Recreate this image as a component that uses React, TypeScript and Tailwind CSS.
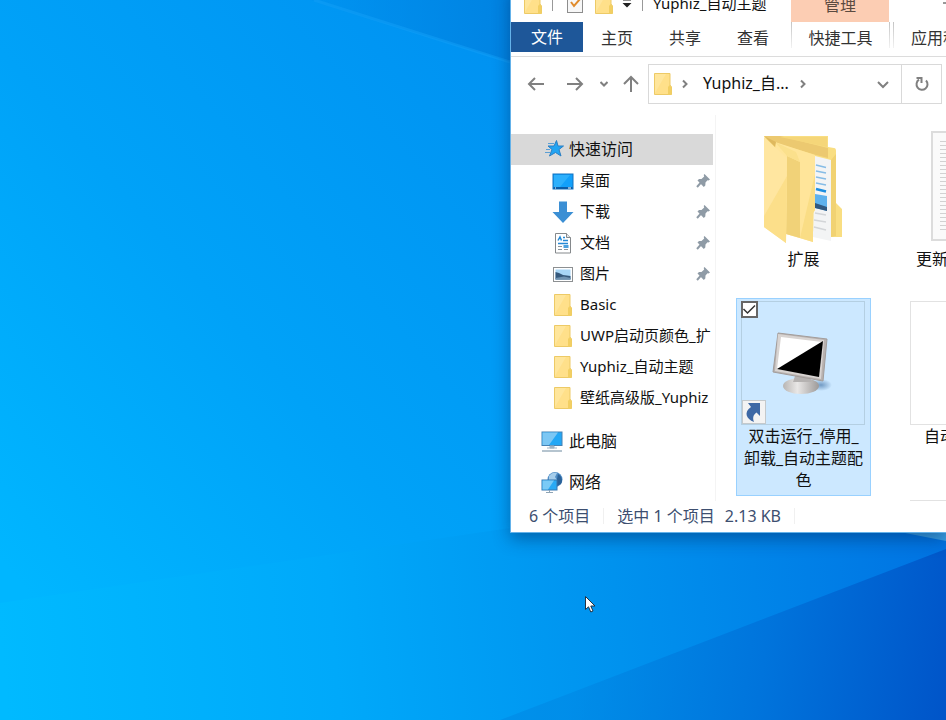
import type { ReactNode } from "react";

function Wallpaper() {
  return (
    <svg className="absolute inset-0 h-full w-full" viewBox="0 0 946 720" preserveAspectRatio="none" aria-hidden="true">
      <defs>
        <linearGradient id="sky" x1="0" y1="560" x2="560" y2="80" gradientUnits="userSpaceOnUse">
          <stop offset="0" stopColor="#00b6ff" />
          <stop offset="0.45" stopColor="#00a2f8" />
          <stop offset="1" stopColor="#0091f1" />
        </linearGradient>
        <linearGradient id="corner" x1="300" y1="20" x2="510" y2="0" gradientUnits="userSpaceOnUse">
          <stop offset="0" stopColor="#0086e4" stopOpacity="0.1" />
          <stop offset="1" stopColor="#0083e2" />
        </linearGradient>
        <linearGradient id="floor" x1="0" y1="640" x2="946" y2="560" gradientUnits="userSpaceOnUse">
          <stop offset="0" stopColor="#00baff" />
          <stop offset="0.35" stopColor="#00a9fa" />
          <stop offset="0.65" stopColor="#0092ee" />
          <stop offset="1" stopColor="#0073e2" />
        </linearGradient>
        <linearGradient id="wedge" x1="580" y1="640" x2="946" y2="690" gradientUnits="userSpaceOnUse">
          <stop offset="0" stopColor="#0085e2" stopOpacity="0.5" />
          <stop offset="0.5" stopColor="#0074dc" />
          <stop offset="1" stopColor="#0055c9" />
        </linearGradient>
      </defs>
      <rect width="946" height="720" fill="url(#sky)" />
      <path d="M310 0H946V200L510 62Z" fill="url(#corner)" />
      <path d="M314 0L510 62" stroke="#12a0f8" strokeOpacity="0.5" strokeWidth="3" />
      <path d="M0 603L510 528L946 500V720H0Z" fill="url(#floor)" />
      <path d="M946 549L500 720H946Z" fill="url(#wedge)" />
      <path d="M880 525L946 531V541L900 532Z" fill="#3aa0e4" />
    </svg>
  );
}

function FolderIcon() {
  return (
    <svg className="h-[22px] w-[18px] shrink-0" viewBox="0 0 18 22" aria-hidden="true">
      <path d="M0.5 0.5H16V12L17.5 14V21.5H0.5Z" fill="#ffe08a" stroke="#edca66" />
      <path d="M1 20V1H12Z" fill="#ffe9a8" opacity="0.6" />
      <path d="M14 21.500V14L15.500 12L17.500 14V21.500Z" fill="#f2cf63" />
    </svg>
  );
}

function StarIcon() {
  return (
    <svg className="h-5 w-5 shrink-0" viewBox="0 0 20 20" aria-hidden="true">
      <path d="M11.500 1.500L13 7H18.500L14 10.500L16 17L10.500 13.500L4.500 17L7 10.500L3 7H9Z" fill="#22a5f3" stroke="#2b7fc4" />
      <path d="M3 4.500H9M1 10.500H5M0 13.500H5" stroke="#5b9fd4" />
    </svg>
  );
}

function DesktopIcon() {
  return (
    <svg className="h-[22px] w-[22px] shrink-0" viewBox="0 0 22 22" aria-hidden="true">
      <rect x="1" y="4" width="20" height="15" fill="#12a0fa" stroke="#1272c0" />
      <path d="M2 17V5H18L8 17Z" fill="#2db0fc" />
      <path d="M1.500 18H20.500" stroke="#0b5da8" strokeWidth="2" />
      <path d="M3 18H4M16 18H19" stroke="#fff" />
    </svg>
  );
}

function DownloadIcon() {
  return (
    <svg className="h-[22px] w-[22px] shrink-0" viewBox="0 0 22 22" aria-hidden="true">
      <path d="M7 0.500H15V11H21.500L11 22L0.500 11H7Z" fill="#3b8fd4" />
    </svg>
  );
}

function DocumentIcon() {
  return (
    <svg className="h-[22px] w-[22px] shrink-0" viewBox="0 0 22 22" aria-hidden="true">
      <path d="M3.500 1.500H14.500L18.500 5.500V21H3.500Z" fill="#fff" stroke="#85898c" />
      <path d="M14.500 1.500V5.500H18.500" fill="#e4e6e8" stroke="#85898c" />
      <path d="M6 8.500L8 5L9.500 8.500M11 5.500H13M11 8.500H16M6 11.500H16" fill="none" stroke="#2589d6" strokeWidth="1.500" />
      <path d="M6 14.500H10M6 17.500H10M12 17.500H16" stroke="#8b949b" />
      <rect x="11.500" y="13" width="5" height="3" fill="#4ba0de" />
    </svg>
  );
}

function PictureIcon() {
  return (
    <svg className="h-[22px] w-[22px] shrink-0" viewBox="0 0 22 22" aria-hidden="true">
      <rect x="1.500" y="4.500" width="19" height="14" fill="#fff" stroke="#8d9092" />
      <rect x="3.500" y="6.500" width="15" height="10" fill="#a7d6f7" />
      <path d="M3.500 16.500V9L7 10L11 12L18.500 13V16.500Z" fill="#35597c" />
      <path d="M3.500 15L12 13.500L18.500 15V16.500H3.500Z" fill="#6f93b2" />
    </svg>
  );
}

function ComputerIcon() {
  return (
    <svg className="h-[22px] w-[22px] shrink-0" viewBox="0 0 22 22" aria-hidden="true">
      <rect x="1" y="2" width="20" height="13.500" fill="#23a7f5" stroke="#4682b4" />
      <path d="M1.500 15V2.500H17L8 15Z" fill="#7cc7f4" />
      <path d="M9 16H13V18H9ZM6 18H16" stroke="#9fb4c4" fill="#9fb4c4" />
      <path d="M1 21H21" stroke="#9db0bf" strokeWidth="1.500" />
    </svg>
  );
}

function NetworkIcon() {
  return (
    <svg className="h-[22px] w-[22px] shrink-0" viewBox="0 0 22 22" aria-hidden="true">
      <circle cx="14" cy="8.500" r="7.500" fill="#4f8dc6" />
      <path d="M8 5C10 2 13 1 16 2L14 6L16 9L12 11L8 9Z" fill="#a5cdeb" />
      <path d="M17 3C21 5 22 10 20 13L16 15V8Z" fill="#2b6299" />
      <rect x="1" y="9" width="15" height="10" fill="#29aaf5" stroke="#3777b0" />
      <path d="M1.500 18.500V9.500H13L7 18.500Z" fill="#7acaf6" />
      <path d="M8.500 19V21M5 21.500H12" stroke="#8fa5b6" />
    </svg>
  );
}

function PinIcon() {
  return (
    <svg className="h-4 w-4 shrink-0" viewBox="0 0 16 16" aria-hidden="true">
      <path d="M9.500 1L15 6.500L13.500 7.500L12.500 7.200L10.500 9.500L10.300 12.500L8.800 14L2.500 7.500L4 6L6.500 6L9.200 3.500L8.700 2Z" fill="#8f9ba6" />
      <path d="M6 9.500L2 14" stroke="#8f9ba6" strokeWidth="2" />
    </svg>
  );
}

function CheckedPageIcon() {
  return (
    <svg className="h-[22px] w-4 shrink-0" viewBox="0 0 16 22" aria-hidden="true">
      <rect x="0.500" y="0.500" width="15" height="20" fill="#f7f7f7" stroke="#8d8d8d" />
      <path d="M4 10L7 14L13 7" fill="none" stroke="#e08b2c" strokeWidth="2" />
    </svg>
  );
}

function OpenFolder() {
  return (
    <svg className="h-[124px] w-[124px]" viewBox="0 0 124 124" aria-hidden="true">
      <path d="M22 12H86V23L92 24Q94 24 94 27V79L100 85V113H80L60 100Z" fill="#f9de82" />
      <path d="M22 12H38L86 24V34L74 31L34 19Z" fill="#ecc970" />
      <path d="M38 13H85V23Z" fill="#f5d679" />
      <path d="M89 36L94 30V112L89 113Z" fill="#f1d272" />
      <path d="M73 32L89 36V117L71 113Z" fill="#f3f4f5" />
      <path d="M74 41L84 43.500M74 47L84 49M74 53L84 55M74 59L84 61" stroke="#86bce6" strokeWidth="1.500" />
      <path d="M73 89L84 91M72 96L84 98M72 103L84 106" stroke="#d3d5d8" strokeWidth="1.500" />
      <path d="M74 65L84 67.500" stroke="#1d8ee0" strokeWidth="2.500" />
      <path d="M73 70L85 72V87L73 84Z" fill="#5eb1ed" />
      <path d="M73 79L85 83V87L73 84Z" fill="#31587f" />
      <path d="M33 18L73 31V86L71 89V118L44 110Z" fill="#ffe59a" />
      <path d="M73 50V86L71 89V118L58 114Z" fill="#fadd85" />
      <path d="M45 32L58 38V114L44 110Z" fill="#f1d278" />
      <path d="M45 32L33 18L54 28L58 38Z" fill="#fbe08c" />
      <path d="M22 13L33 23L45 34L44 119L22 103Z" fill="#ffe6a0" />
      <path d="M45 52L44 119L22 103V92Z" fill="#fcdf8a" />
      <path d="M22 12L34 18L33 23Z" fill="#dfb95e" />
    </svg>
  );
}

function MonitorPicture() {
  return (
    <svg className="h-full w-full" viewBox="0 0 122 122" aria-hidden="true">
      <defs>
        <radialGradient id="shade">
          <stop offset="0" stopColor="#5b87b5" stopOpacity="0.8" />
          <stop offset="1" stopColor="#5b87b5" stopOpacity="0" />
        </radialGradient>
        <linearGradient id="base" x1="0" y1="0" x2="1" y2="0">
          <stop offset="0" stopColor="#b8b5b3" />
          <stop offset="0.400" stopColor="#e9e7e6" />
          <stop offset="1" stopColor="#9d9a99" />
        </linearGradient>
      </defs>
      <ellipse cx="79" cy="83" rx="11" ry="6" fill="url(#shade)" />
      <ellipse cx="59" cy="84" rx="18" ry="8" fill="url(#base)" />
      <path d="M53 74H67L70 80H51Z" fill="#b5b2b1" />
      <path d="M36 31L85 37L81 79L31 70Z" fill="#b8b2b0" stroke="#a39d9b" />
      <path d="M36 32L82 38L79 77L33 69Z" fill="#d8d4d2" />
      <path d="M39 35L80 40L76 74L35 67Z" fill="#fff" />
      <path d="M81 39L77 75L35 67Z" fill="#000" />
    </svg>
  );
}

function Chevron({ down = false }: { down?: boolean }) {
  return (
    <svg className="h-3 w-3" viewBox="0 0 12 12" fill="none" stroke="#808080" strokeWidth="2" aria-hidden="true">
      <path d={down ? "M1 4L6 9L11 4" : "M4 2.500L7.500 6L4 9.500"} />
    </svg>
  );
}

function NavRow({ icon, label, pinned = false }: { icon: ReactNode; label: string; pinned?: boolean }) {
  return (
    <li>
      <button className="flex h-[31px] w-full items-center gap-[6px] overflow-hidden pl-[41px] text-left">
        <span className="flex w-[22px] shrink-0 justify-center">{icon}</span>
        <span className="flex-1 whitespace-nowrap">{label}</span>
        {pinned && <span className="pr-[2px]"><PinIcon /></span>}
      </button>
    </li>
  );
}

function TitleBar() {
  return (
    <header className="flex h-[38px] overflow-hidden whitespace-nowrap">
      <div className="flex w-[280px] shrink-0 items-center pl-[13px]">
        <FolderIcon />
        <span className="ml-[10px] h-4 w-px bg-[#999]" />
        <button aria-label="属性" className="ml-[14px]"><CheckedPageIcon /></button>
        <button aria-label="新建文件夹" className="ml-[12px]"><FolderIcon /></button>
        <button aria-label="自定义快速访问工具栏" className="ml-[8px]">
          <svg className="h-3 w-3" viewBox="0 0 12 12" aria-hidden="true">
            <path d="M2 2H10V3.500H2ZM1.500 6H10.500L6 10.500Z" fill="#222" />
          </svg>
        </button>
        <span className="ml-[9px] h-4 w-px bg-[#999]" />
        <h1 className="ml-[10px] text-[15px]">Yuphiz_自动主题</h1>
      </div>
      <div className="flex w-[98px] shrink-0 items-center justify-center bg-[#fccdb3] pt-1 text-[#5b4a40]">管理</div>
      <button aria-label="最小化" className="ml-[54px] shrink-0">
        <svg className="h-3 w-3" viewBox="0 0 12 12" aria-hidden="true"><path d="M0 6H12" stroke="#333" /></svg>
      </button>
    </header>
  );
}

function Ribbon() {
  return (
    <nav className="flex h-[35px] items-start overflow-hidden whitespace-nowrap border-b border-[#dcdcdc] text-[#333]">
      <button className="h-[30px] w-[72px] shrink-0 bg-[#1e5799] text-white">文件</button>
      <button className="h-8 w-[68px] shrink-0">主页</button>
      <button className="h-8 w-[68px] shrink-0">共享</button>
      <button className="h-8 w-[68px] shrink-0">查看</button>
      <span className="ml-1 h-[26px] w-px shrink-0 bg-linear-to-b from-[#c4c4c4] to-[#f2f2f2]" />
      <button className="h-8 w-[97px] shrink-0">快捷工具</button>
      <span className="h-[26px] w-px shrink-0 bg-linear-to-b from-[#c4c4c4] to-[#f2f2f2]" />
      <span className="ml-[3px] h-[26px] w-px shrink-0 bg-linear-to-b from-[#c4c4c4] to-[#f2f2f2]" />
      <button className="h-8 shrink-0 pl-[17px]">应用程序工具</button>
    </nav>
  );
}

function AddressBar() {
  return (
    <div className="flex h-[58px] items-start pt-[7px] pr-1">
      <div className="flex h-[40px] w-[137px] shrink-0 items-center pl-4 text-[#808080]">
        <button aria-label="后退">
          <svg className="h-[18px] w-[18px]" viewBox="0 0 18 18" fill="none" stroke="currentColor" strokeWidth="2" aria-hidden="true"><path d="M17 9H2M8 3L2 9L8 15" /></svg>
        </button>
        <button aria-label="前进" className="ml-[21px]">
          <svg className="h-[18px] w-[18px]" viewBox="0 0 18 18" fill="none" stroke="currentColor" strokeWidth="2" aria-hidden="true"><path d="M1 9H16M10 3L16 9L10 15" /></svg>
        </button>
        <button aria-label="最近浏览的位置" className="ml-4">
          <svg className="h-2 w-2" viewBox="0 0 8 8" fill="none" stroke="currentColor" strokeWidth="2" aria-hidden="true"><path d="M0.500 2L4 5.500L7.500 2" /></svg>
        </button>
        <button aria-label="上移" className="ml-[14px]">
          <svg className="h-[18px] w-[18px]" viewBox="0 0 18 18" fill="none" stroke="currentColor" strokeWidth="2" aria-hidden="true"><path d="M9 17V2M2 9L9 2L16 9" /></svg>
        </button>
      </div>
      <div className="flex h-[40px] min-w-0 flex-1 items-center border border-[#d9d9d9] pl-[5px]">
        <FolderIcon />
        <span className="ml-[7px]"><Chevron /></span>
        <button className="ml-[12px] whitespace-nowrap pb-[2px]">Yuphiz_自...</button>
        <span className="ml-[8px]"><Chevron /></span>
        <button aria-label="以前的位置" className="mr-[12px] ml-auto"><Chevron down /></button>
        <button aria-label="刷新" className="flex h-full w-10 shrink-0 items-center justify-center border-l border-[#d9d9d9]">
          <svg className="h-4 w-4" viewBox="0 0 16 16" fill="none" stroke="#808080" strokeWidth="2" aria-hidden="true">
            <path d="M12 4.500A5.500 5.500 0 1 1 5 3.700M2.500 2H7.500V7" />
          </svg>
        </button>
      </div>
    </div>
  );
}

function Sidebar() {
  return (
    <nav className="w-[205px] shrink-0 border-r border-[#f4f4f4] pt-[19px] pr-[2px]">
      <button className="flex h-[31px] w-full items-center gap-1 bg-[#d9d9d9] pb-px pl-[34px] text-left"><StarIcon />快速访问</button>
      <ul className="text-[15px]">
        <NavRow icon={<DesktopIcon />} label="桌面" pinned />
        <NavRow icon={<DownloadIcon />} label="下载" pinned />
        <NavRow icon={<DocumentIcon />} label="文档" pinned />
        <NavRow icon={<PictureIcon />} label="图片" pinned />
        <NavRow icon={<FolderIcon />} label="Basic" />
        <NavRow icon={<FolderIcon />} label="UWP启动页颜色_扩" />
        <NavRow icon={<FolderIcon />} label="Yuphiz_自动主题" />
        <NavRow icon={<FolderIcon />} label="壁纸高级版_Yuphiz" />
      </ul>
      <button className="mt-[12px] flex h-[31px] w-full items-center gap-[6px] pl-[30px]"><ComputerIcon />此电脑</button>
      <button className="mt-[10px] flex h-[31px] w-full items-center gap-[6px] pl-[30px]"><NetworkIcon />网络</button>
    </nav>
  );
}

function FileGrid() {
  return (
    <main className="grid min-w-0 flex-1 grid-cols-[135px_135px] grid-rows-[177px_198px_10px] gap-x-[34px] overflow-hidden pt-[6px] pl-[20px] leading-[22px]">
      <figure className="p-[3px] text-center">
        <div className="flex justify-center"><OpenFolder /></div>
        <figcaption>扩展</figcaption>
      </figure>
      <figure className="p-[3px]">
        <div className="flex h-[124px] pt-[7px] pl-[23px]">
          <div className="h-[110px] w-20 border-2 border-[#dcdcdc] bg-[#fafafa] pt-2 pl-[7px]">
            <div className="h-[92px] w-16 bg-[repeating-linear-gradient(#d2d2d2_0_1px,transparent_1px_4px)]" />
          </div>
        </div>
        <figcaption className="pl-[8px]">更新</figcaption>
      </figure>
      <label className="block border border-[#99d1ff] bg-[#cce8ff] px-1 pt-[2px] text-center">
        <span className="relative block h-[124px] w-[124px] border border-[#b4cfe2]">
          <MonitorPicture />
          <input type="checkbox" defaultChecked className="absolute -top-px -left-px h-[17px] w-[17px] appearance-none border-2 border-[#666] bg-white" />
          <svg className="absolute top-0 left-0 h-[15px] w-[15px]" viewBox="0 0 15 15" fill="none" stroke="#333" strokeWidth="1.500" aria-hidden="true"><path d="M1.500 7L5.500 11L13 3.500" /></svg>
          <svg className="absolute bottom-0 left-0 h-6 w-6" viewBox="0 0 24 24" aria-hidden="true">
            <rect x="0.500" y="0.500" width="23" height="23" fill="#f3f3f3" stroke="#c4c9cc" />
            <path d="M6 3H18V16L14.500 12.500C11 15 10.500 18 12 22C4 19 1.500 12 9 7Z" fill="#3d68a5" />
          </svg>
        </span>
        <span className="block">双击运行_停用_<br />卸载_自动主题配<br />色</span>
      </label>
      <figure className="px-[5px] pt-[3px] text-center">
        <div className="h-[124px] w-[124px] border border-[#e2e2e2]" />
        <figcaption className="w-[124px]">自动主题配色</figcaption>
      </figure>
      <div className="col-start-2 px-[5px] pt-1">
        <div className="h-[124px] w-[124px] border border-[#e2e2e2]" />
      </div>
    </main>
  );
}

export default function App() {
  return (
    <div className="relative h-screen w-full overflow-hidden bg-[#00a2f8] font-['Noto_Sans','Noto_Sans_CJK_SC',sans-serif] text-base text-[#111]">
      <Wallpaper />
      <section className="absolute -top-4 right-0 left-[510px] border-b border-l border-[#64b2ea] bg-white shadow-[0_6px_16px_rgba(0,40,90,0.45)]">
        <TitleBar />
        <Ribbon />
        <AddressBar />
        <div className="flex h-[386px] overflow-hidden">
          <Sidebar />
          <FileGrid />
        </div>
        <footer className="flex h-[31px] items-center whitespace-nowrap pb-px pl-[18px] text-[#3d4f70]">
          <span>6 个项目</span>
          <span className="ml-[13px] h-4 w-px bg-[#f0f0f0]" />
          <span className="ml-[13px]">选中 1 个项目</span>
          <span className="ml-[10px]">2.13 KB</span>
          <span className="ml-[13px] h-4 w-px bg-[#f0f0f0]" />
        </footer>
      </section>
      <svg className="absolute top-[596px] left-[585px] h-[17px] w-[11px]" viewBox="0 0 11 17" aria-hidden="true">
        <path d="M0.500 0.500V13.500L3.500 10.800L5.800 16L8 15L5.800 10H10Z" fill="#fff" stroke="#234" />
      </svg>
    </div>
  );
}
